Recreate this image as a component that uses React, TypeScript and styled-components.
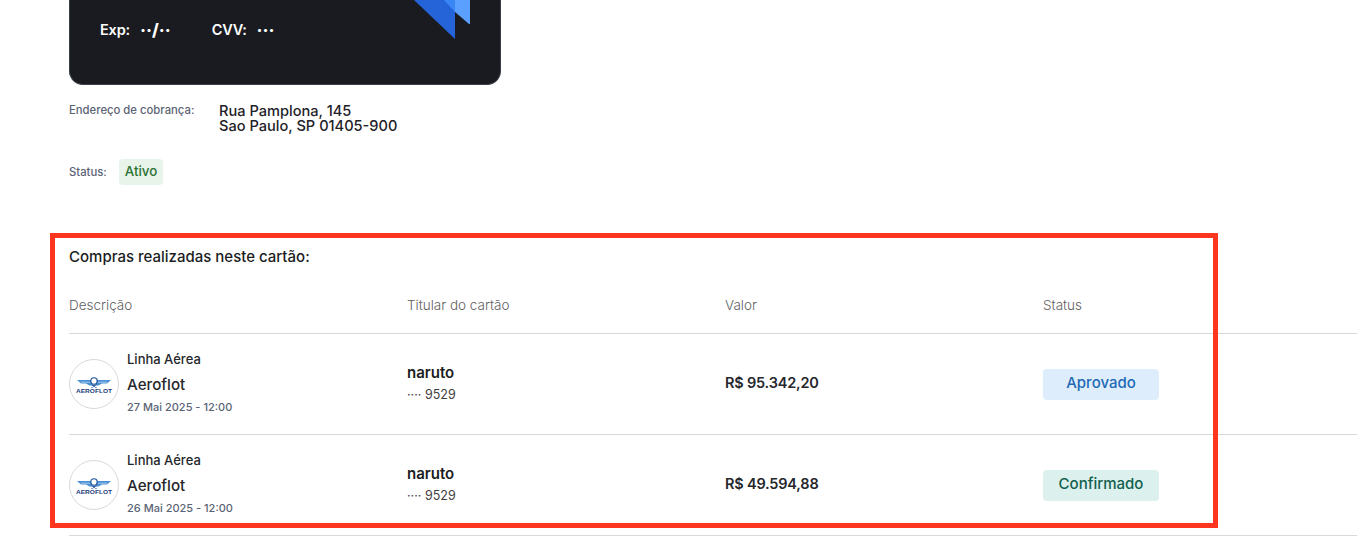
import styled, { createGlobalStyle } from "styled-components";

const GlobalStyle = createGlobalStyle`
  html, body {
    margin: 0;
    padding: 0;
    background: #ffffff;
    overflow: hidden;
  }
  body {
    font-family: "Inter", "Noto Sans", sans-serif;
    color: #1b1d22;
  }
`;

// Start Styled Components
const Page = styled.div`
  position: relative;
  width: 1357px;
  height: 539px;
  overflow: hidden;
  padding-left: 69px;
  box-sizing: border-box;
`;

const Card = styled.div`
  position: relative;
  width: 432px;
  height: 85px;
  box-sizing: border-box;
  background: #191b20;
  border: 1px solid #3b4048;
  border-top: none;
  border-radius: 0 0 14px 14px;
  overflow: hidden;
  display: flex;
  gap: 41px;
  padding: 21px 0 0 30px;
  color: #ffffff;
  font-size: 14.5px;
  font-weight: 600;
`;

const CardField = styled.div`
  display: flex;
  align-items: center;
  gap: 10px;
  height: 18px;
  line-height: 18px;
  letter-spacing: -0.2px;
`;

const MaskDots = styled.span`
  font-size: 17px;
  font-weight: 800;
  letter-spacing: 0;
`;

const CardLogo = styled.svg`
  position: absolute;
  left: 340px;
  top: 0;
`;

const AddressRow = styled.div`
  display: flex;
  margin-top: 18px;
`;

const FieldLabel = styled.div`
  font-size: 11.3px;
  font-weight: 500;
  color: #5b6475;
  line-height: 14px;
`;

const AddressLabel = styled(FieldLabel)`
  width: 150px;
`;

const Address = styled.div`
  font-size: 14.6px;
  font-weight: 500;
  line-height: 15px;
  color: #1f2229;
  margin-top: 1px;
`;

const StatusRow = styled.div`
  display: flex;
  align-items: center;
  gap: 12px;
  margin-top: 25px;
`;

const ActiveBadge = styled.span`
  height: 26px;
  line-height: 25px;
  padding: 0 6px;
  border-radius: 4px;
  background: #e8f3e9;
  color: #2a7133;
  font-size: 13.3px;
  font-weight: 500;
`;

const SectionTitle = styled.h2`
  margin: 62px 0 0;
  font-size: 15px;
  line-height: 20px;
  font-weight: 500;
  color: #1b1d22;
`;

const Row = styled.div<{ $head?: boolean }>`
  display: grid;
  grid-template-columns: 338px 318px 318px 1fr;
  align-items: center;
  height: ${(props) => (props.$head ? "66px" : "100px")};
  border-bottom: 1px solid #d9d9d9;
  box-sizing: content-box;
`;

const HeadCell = styled.div`
  font-size: 13.5px;
  font-weight: 300;
  color: #5f6062;
  padding-top: 10px;
`;

const Description = styled.div`
  display: flex;
  align-items: center;
  gap: 8px;
`;

const LogoCircle = styled.div`
  width: 50px;
  height: 50px;
  box-sizing: border-box;
  border: 1px solid #d9d9d9;
  border-radius: 50%;
  display: flex;
  align-items: center;
  justify-content: center;
`;

const DescriptionText = styled.div`
  padding-bottom: 4px;
`;

const Category = styled.div`
  font-size: 13px;
  font-weight: 500;
  line-height: 16px;
  color: #25272c;
`;

const Company = styled.div`
  font-size: 15.2px;
  font-weight: 500;
  line-height: 18px;
  margin: 9px 0 6px;
  color: #25272c;
`;

const DateText = styled.div`
  font-size: 11px;
  font-weight: 500;
  line-height: 14px;
  color: #5b6475;
`;

const Holder = styled.div`
  padding-bottom: 1px;
`;

const HolderName = styled.div`
  font-size: 15px;
  font-weight: 600;
  line-height: 18px;
  color: #1b1d22;
`;

const CardDigits = styled.div`
  font-size: 12.5px;
  line-height: 16px;
  margin-top: 5px;
  color: #3f4043;
`;

const Amount = styled.div`
  font-size: 14.5px;
  font-weight: 600;
  letter-spacing: -0.2px;
  padding-bottom: 3px;
  color: #25272c;
`;

const StatusPill = styled.div<{ $bg: string; $fg: string }>`
  width: 116px;
  height: 31px;
  line-height: 28px;
  text-align: center;
  border-radius: 4px;
  background: ${(props) => props.$bg};
  color: ${(props) => props.$fg};
  font-size: 15px;
  font-weight: 500;
`;

const Highlight = styled.div`
  position: absolute;
  left: 50px;
  top: 233px;
  width: 1168px;
  height: 295px;
  box-sizing: border-box;
  border: 5px solid #ff361f;
  pointer-events: none;
`;
// End Styled Components

const AeroflotLogo = () => (
  <svg width="40" height="24" viewBox="0 0 40 24">
    <path d="M3 8h14l1 5.5h-2.5L12 11.5H7z" fill="#4a90d4" />
    <path d="M37 8H23l-1 5.5h2.5l3.5-2h5z" fill="#4a90d4" />
    <path d="M7 10.2h10M33 10.2H23" stroke="#ffffff" strokeWidth="0.5" />
    <circle cx="20" cy="9" r="3.2" fill="none" stroke="#1c4f98" strokeWidth="1.1" />
    <path d="M17.5 12.5l5 3M22.5 12.5l-5 3" stroke="#1c4f98" strokeWidth="1.1" />
    <text
      x="20"
      y="20.5"
      textAnchor="middle"
      fontSize="5.6"
      fontWeight="800"
      fontFamily="Liberation Sans, sans-serif"
      fill="#1c3f7c"
      textLength="36"
      lengthAdjust="spacingAndGlyphs"
    >
      AEROFLOT
    </text>
  </svg>
);

const purchases = [
  {
    date: "27 Mai 2025 - 12:00",
    amount: "R$ 95.342,20",
    status: "Aprovado",
    bg: "#deedfb",
    fg: "#2169b5",
  },
  {
    date: "26 Mai 2025 - 12:00",
    amount: "R$ 49.594,88",
    status: "Confirmado",
    bg: "#dcf0ed",
    fg: "#11604f",
  },
];

const App = () => {
  return (
    <Page>
      <GlobalStyle />
      <Card>
        <CardField>
          <span>Exp:</span>
          <MaskDots>··/··</MaskDots>
        </CardField>
        <CardField>
          <span>CVV:</span>
          <MaskDots>···</MaskDots>
        </CardField>
        <CardLogo width="70" height="45" viewBox="0 0 70 45">
          <path d="M4 0h41v39z" fill="#2563d9" />
          <path d="M34 0h11v12z" fill="#3b86f5" />
          <path d="M45 0h15v24l-1 0L45 12z" fill="#5ba0ff" />
        </CardLogo>
      </Card>

      <AddressRow>
        <AddressLabel>Endereço de cobrança:</AddressLabel>
        <Address>
          Rua Pamplona, 145
          <br />
          Sao Paulo, SP 01405-900
        </Address>
      </AddressRow>

      <StatusRow>
        <FieldLabel>Status:</FieldLabel>
        <ActiveBadge>Ativo</ActiveBadge>
      </StatusRow>

      <SectionTitle>Compras realizadas neste cartão:</SectionTitle>

      <Row $head>
        <HeadCell>Descrição</HeadCell>
        <HeadCell>Titular do cartão</HeadCell>
        <HeadCell>Valor</HeadCell>
        <HeadCell>Status</HeadCell>
      </Row>

      {purchases.map((item) => (
        <Row key={item.date}>
          <Description>
            <LogoCircle>
              <AeroflotLogo />
            </LogoCircle>
            <DescriptionText>
              <Category>Linha Aérea</Category>
              <Company>Aeroflot</Company>
              <DateText>{item.date}</DateText>
            </DescriptionText>
          </Description>
          <Holder>
            <HolderName>naruto</HolderName>
            <CardDigits>···· 9529</CardDigits>
          </Holder>
          <Amount>{item.amount}</Amount>
          <StatusPill $bg={item.bg} $fg={item.fg}>
            {item.status}
          </StatusPill>
        </Row>
      ))}

      <Highlight />
    </Page>
  );
};

export default App;
